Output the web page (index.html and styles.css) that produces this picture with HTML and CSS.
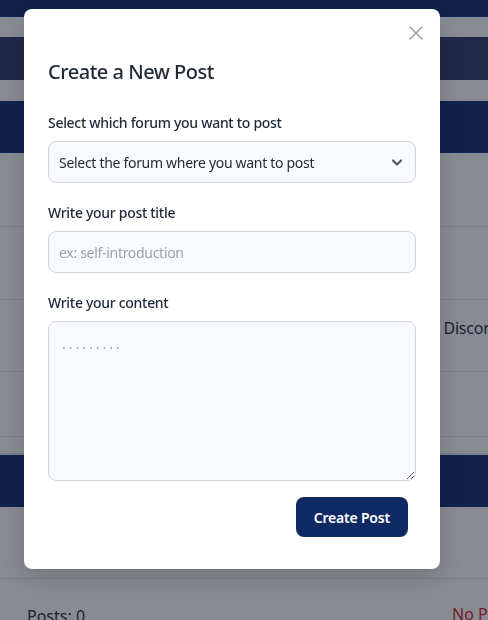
FILE: index.html
```html
<!DOCTYPE html>
<html lang="en">
<head>
<meta charset="utf-8">
<title>Create a New Post</title>
<link rel="stylesheet" href="styles.css">
</head>
<body>
<div class="page">
  <div class="topbar"></div>
  <div class="spacer s20"></div>
  <div class="band"></div>
  <div class="spacer s21"></div>
  <div class="hero"></div>
  <div class="row r74"></div>
  <div class="row r73"></div>
  <div class="row r72"><span class="row-text">Join us: Discord</span></div>
  <div class="row r65"></div>
  <div class="card-edge"></div>
  <div class="hero2"></div>
  <div class="row r72"></div>
  <div class="stats">
    <span class="posts">Posts: 0</span>
    <span class="noposts">No Posts</span>
  </div>
</div>

<div class="overlay">
  <div class="modal">
    <button class="close" type="button" aria-label="Close">
      <svg width="24" height="24" viewBox="0 0 24 24" fill="none" stroke="#9ca3af" stroke-width="1.6" stroke-linecap="round">
        <path d="M6 6l12 12M18 6L6 18"/>
      </svg>
    </button>
    <h2 class="title">Create a New Post</h2>
    <div class="field">
      <label class="label">Select which forum you want to post</label>
      <div class="select">
        <span>Select the forum where you want to post</span>
        <svg width="16" height="16" viewBox="0 0 20 20" fill="none" stroke="#4b5563" stroke-width="2.6" stroke-linecap="round" stroke-linejoin="round">
          <path d="M5 8l5 5 5-5"/>
        </svg>
      </div>
    </div>
    <div class="field">
      <label class="label">Write your post title</label>
      <input class="input" type="text" placeholder="ex: self-introduction">
    </div>
    <div class="field field-last">
      <label class="label">Write your content</label>
      <textarea class="textarea" placeholder="........."></textarea>
    </div>
    <div class="actions">
      <button class="submit" type="button">Create Post</button>
    </div>
  </div>
</div>
</body>
</html>
```

FILE: styles.css
```css
html, body {
  margin: 0;
  padding: 0;
}
body {
  font-family: "Noto Sans", "Open Sans", sans-serif;
  background: #ffffff;
  overflow: hidden;
  height: 620px;
}
.page {
  display: flex;
  flex-direction: column;
}
.topbar { height: 17px; background: #132c6d; }
.spacer { background: #fff; }
.s20 { height: 20px; }
.s21 { height: 21px; }
.band { height: 43px; background: #2d3c69; }
.hero { height: 52px; background: #132c6d; }
.hero2 { height: 52px; background: #132c6d; }
.row {
  border-bottom: 1px solid #e5e7eb;
  box-sizing: border-box;
  display: flex;
  align-items: center;
}
.r74 { height: 74px; }
.r73 { height: 73px; }
.r72 { height: 72px; }
.r65 { height: 65px; }
.row-text {
  padding-left: 387px;
  font-size: 16px;
  color: #1f2937;
  white-space: nowrap;
  margin-bottom: 16px;
  letter-spacing: -0.2px;
}
.card-edge {
  height: 18px;
  border-bottom: 2px solid #e5e7eb;
  box-sizing: border-box;
}
.stats {
  display: grid;
  grid-template-columns: 425px 1fr;
  padding: 24px 0 0 27px;
  font-size: 16px;
  white-space: nowrap;
}
.posts { color: #1f2937; margin-top: 2px; }
.noposts { color: #dc2626; }

.overlay {
  position: fixed;
  inset: 0;
  background: rgba(17, 24, 39, 0.5);
}
.modal {
  position: relative;
  margin: 9px 0 0 24px;
  width: 416px;
  box-sizing: border-box;
  background: #fff;
  border-radius: 8px;
  padding: 49px 24px 32px;
  box-shadow: 0 10px 25px rgba(0,0,0,0.15);
}
.close {
  position: absolute;
  top: 12px;
  right: 12px;
  width: 24px;
  height: 24px;
  padding: 0;
  border: 0;
  background: none;
  display: flex;
}
.title {
  margin: 0 0 27px;
  font-size: 20px;
  line-height: 28px;
  font-weight: 500;
  color: #1f2937;
  letter-spacing: -0.5px;
}
.field {
  display: flex;
  flex-direction: column;
  gap: 8px;
  margin-bottom: 20px;
}
.field-last { margin-bottom: 0; }
.label {
  font-size: 14px;
  line-height: 20px;
  font-weight: 500;
  color: #1f2937;
  letter-spacing: -0.3px;
}
.select, .input, .textarea {
  box-sizing: border-box;
  width: 100%;
  border: 1px solid #d1d5db;
  border-radius: 8px;
  background: #f9fafb;
  font-family: inherit;
  font-size: 14px;
  color: #1f2937;
  letter-spacing: -0.3px;
}
.select {
  height: 42px;
  display: flex;
  align-items: center;
  justify-content: space-between;
  padding: 0 10px 0 10px;
}
.input {
  height: 42px;
  padding: 0 10px;
  outline: none;
}
.input::placeholder { color: #9ca3af; }
.textarea {
  height: 160px;
  padding: 12px 13px;
  resize: vertical;
  outline: none;
  display: block;
}
.textarea::placeholder { color: #9ca3af; letter-spacing: 3px; }
.actions {
  display: flex;
  justify-content: flex-end;
  padding: 16px 8px 0 0;
}
.submit {
  height: 40px;
  padding: 0 18px;
  background: #0f2a63;
  color: #fff;
  border: 0;
  border-radius: 8px;
  font-family: inherit;
  font-size: 14px;
  font-weight: 600;
  letter-spacing: -0.2px;
}
```
